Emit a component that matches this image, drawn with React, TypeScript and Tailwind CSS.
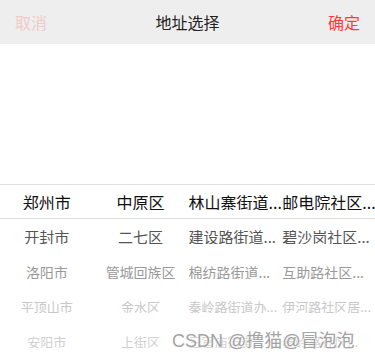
import React from 'react'

const columns = [
  ['郑州市', '开封市', '洛阳市', '平顶山市', '安阳市'],
  ['中原区', '二七区', '管城回族区', '金水区', '上街区'],
  ['林山寨街道...', '建设路街道...', '棉纺路街道...', '秦岭路街道办...', '三官庙街道...'],
  ['邮电院社区...', '碧沙岗社区...', '互助路社区...', '伊河路社区居...', '秦岭路社区...'],
]

// size and colour per row below the indicator (the wheel shrinks and fades)
const rowStyles = [
  'text-base text-[#111] border-y border-[#e0e0e0]',
  'text-[15px] text-[#555]',
  'text-sm text-[#999]',
  'text-[13px] text-[#c8c8c8]',
  'text-[13px] text-[#d0d0d0]',
]

export default function App() {
  return (
    <div
      className="relative w-[375px] h-[359px] overflow-hidden bg-white"
      style={{ fontFamily: '"Noto Sans CJK SC", "Noto Sans", sans-serif' }}
    >
      {/* Header */}
      <div className="h-11 bg-[#eeeeee] flex items-center justify-between px-[15px] text-base">
        <span className="text-[#f0caca]">取消</span>
        <span className="text-[#222]">地址选择</span>
        <span className="text-[#ff3b3b]">确定</span>
      </div>

      {/* Picker */}
      <div className="flex">
        {columns.map((col, ci) => (
          <div key={ci} className="flex-1 min-w-0 flex flex-col">
            <div className="h-[140px]" />
            {col.map((item, ri) => (
              <div
                key={ri}
                className={
                  'h-[35px] flex items-center ' +
                  rowStyles[ri] +
                  (ci < 2 ? ' justify-center' : ' justify-start pl-px')
                }
              >
                <span className="block whitespace-nowrap overflow-hidden leading-none">{item}</span>
              </div>
            ))}
          </div>
        ))}
      </div>

      {/* Watermark */}
      <div
        className="absolute left-[172px] top-[332px] text-[18px] leading-none text-[#9a9a9a] opacity-90"
        style={{ fontFamily: '"Liberation Sans", "Noto Sans CJK SC", sans-serif', textShadow: '0 0 2px #fff, 0 0 2px #fff' }}
      >
        CSDN @撸猫@冒泡泡
      </div>
    </div>
  )
}
